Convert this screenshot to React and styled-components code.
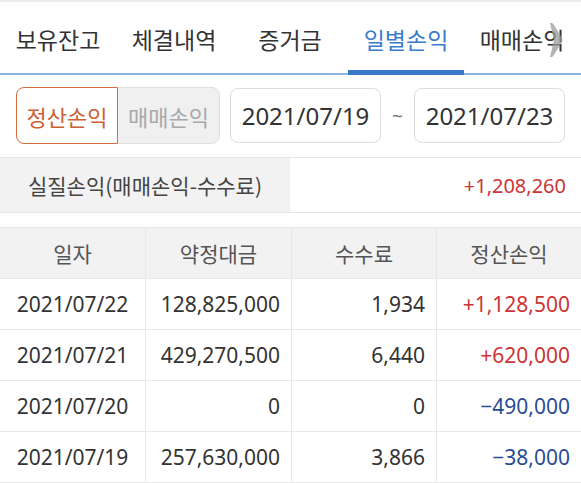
import React from "react";
import styled, { createGlobalStyle } from "styled-components";

const GlobalStyle = createGlobalStyle`
  html, body {
    margin: 0;
    padding: 0;
    background: #ffffff;
  }
  body {
    font-family: "Noto Sans", "Noto Sans CJK KR", sans-serif;
    color: #333;
  }
`;

const Page = styled.div`
  width: 581px;
  overflow: hidden;
  border-top: 2px solid #ececec;
`;

const TabBar = styled.div`
  position: relative;
  display: flex;
  height: 71px;
  border-bottom: 2px solid #8db4e2;
  white-space: nowrap;
`;

const Tab = styled.div`
  flex: 0 0 auto;
  width: ${({ $w }) => $w}px;
  display: flex;
  align-items: center;
  justify-content: center;
  font-family: "Noto Sans CJK KR", sans-serif;
  font-size: 23px;
  color: ${({ $active }) => ($active ? "#3a7ccd" : "#333")};
  border-bottom: 5px solid ${({ $active }) => ($active ? "#3a78c9" : "transparent")};
  margin-bottom: -2px;
  padding-top: 5px;
`;

const Chevron = styled.svg`
  position: absolute;
  right: 18px;
  top: 20px;
  filter: blur(0.6px);
`;

const FilterRow = styled.div`
  display: flex;
  align-items: center;
  padding: 13px 16px 0 16px;
  height: 55px;
`;

const Segment = styled.div`
  display: flex;
  height: 55px;
  border-radius: 8px;
  background: #f0f0f0;
  border: 1px solid #e0e0e0;
`;

const SegButton = styled.div`
  width: ${({ $active }) => ($active ? 100 : 101)}px;
  display: flex;
  align-items: center;
  justify-content: center;
  font-family: "Noto Sans CJK KR", sans-serif;
  font-size: 22px;
  color: ${({ $active }) => ($active ? "#cc5f33" : "#a9a9a9")};
  background: ${({ $active }) => ($active ? "#fff" : "transparent")};
  border: ${({ $active }) => ($active ? "1px solid #d0703f" : "none")};
  border-radius: ${({ $active }) => ($active ? "8px 0 0 8px" : "0 8px 8px 0")};
  margin: ${({ $active }) => ($active ? "-1px 0 -1px -1px" : "0")};
`;

const DateBox = styled.div`
  width: 149px;
  height: 53px;
  margin-left: ${({ $first }) => ($first ? "10px" : "0")};
  border: 1px solid #dcdcdc;
  border-radius: 8px;
  display: flex;
  align-items: center;
  justify-content: center;
  font-size: 24px;
  color: #333;
`;

const Tilde = styled.div`
  width: 33px;
  text-align: center;
  font-size: 19px;
  color: #777;
`;

const Summary = styled.div`
  display: grid;
  grid-template-columns: 290px 1fr;
  height: 54px;
  margin-top: 14px;
  border-top: 1px solid #e6e6e6;
  border-bottom: 1px solid #e6e6e6;
`;

const SummaryLabel = styled.div`
  background: #f2f2f2;
  display: flex;
  align-items: center;
  justify-content: center;
  font-family: "Noto Sans CJK KR", sans-serif;
  font-size: 21px;
  color: #444;
`;

const SummaryValue = styled.div`
  display: flex;
  align-items: center;
  justify-content: flex-end;
  padding-right: 15px;
  font-size: 20px;
  color: #cc3535;
`;

const Table = styled.div`
  margin-top: 14px;
  border-top: 1px solid #e6e6e6;
`;

const Row = styled.div`
  display: grid;
  grid-template-columns: 145px 146px 145px 145px;
  height: 50px;
  border-bottom: 1px solid #e8e8e8;
  background: ${({ $head }) => ($head ? "#f2f2f2" : "#fff")};
`;

const Cell = styled.div`
  display: flex;
  align-items: center;
  justify-content: ${({ $align }) => $align || "flex-end"};
  padding: 0 ${({ $align }) => ($align ? "0" : "11px")};
  border-left: ${({ $first }) => ($first ? "none" : "1px solid #e8e8e8")};
  font-family: ${({ $head }) =>
    $head ? '"Noto Sans CJK KR", sans-serif' : '"Noto Sans", sans-serif'};
  font-size: 21px;
  color: ${({ $tone }) =>
    $tone === "up" ? "#cc3535" : $tone === "down" ? "#2a4c96" : $tone === "head" ? "#555" : "#333"};
`;

const tabs = [
  { label: "보유잔고", w: 116 },
  { label: "체결내역", w: 116 },
  { label: "증거금", w: 116 },
  { label: "일별손익", w: 116, active: true },
  { label: "매매손익", w: 116 },
];

const rows = [
  ["2021/07/22", "128,825,000", "1,934", "+1,128,500", "up"],
  ["2021/07/21", "429,270,500", "6,440", "+620,000", "up"],
  ["2021/07/20", "0", "0", "\u2212490,000", "down"],
  ["2021/07/19", "257,630,000", "3,866", "\u221238,000", "down"],
];

export default function App() {
  return (
    <>
      <GlobalStyle />
      <Page>
        <TabBar>
          {tabs.map((t) => (
            <Tab key={t.label} $w={t.w} $active={t.active}>
              {t.label}
            </Tab>
          ))}
          <Chevron width="16" height="36" viewBox="0 0 16 36">
            <path d="M3 1 Q5 0 7 3 L15 16 Q16 18 15 20 L7 33 Q5 36 3 35 L7 18 Z" fill="#9a9a9a" opacity="0.75" />
          </Chevron>
        </TabBar>

        <FilterRow>
          <Segment>
            <SegButton $active>정산손익</SegButton>
            <SegButton>매매손익</SegButton>
          </Segment>
          <DateBox $first>2021/07/19</DateBox>
          <Tilde>~</Tilde>
          <DateBox>2021/07/23</DateBox>
        </FilterRow>

        <Summary>
          <SummaryLabel>실질손익(매매손익-수수료)</SummaryLabel>
          <SummaryValue>+1,208,260</SummaryValue>
        </Summary>

        <Table>
          <Row $head>
            {["일자", "약정대금", "수수료", "정산손익"].map((h, i) => (
              <Cell key={h} $head $first={i === 0} $align="center" $tone="head">
                {h}
              </Cell>
            ))}
          </Row>
          {rows.map((r) => (
            <Row key={r[0]}>
              <Cell $first $align="center">{r[0]}</Cell>
              <Cell>{r[1]}</Cell>
              <Cell>{r[2]}</Cell>
              <Cell $tone={r[4]}>{r[3]}</Cell>
            </Row>
          ))}
        </Table>
      </Page>
    </>
  );
}
